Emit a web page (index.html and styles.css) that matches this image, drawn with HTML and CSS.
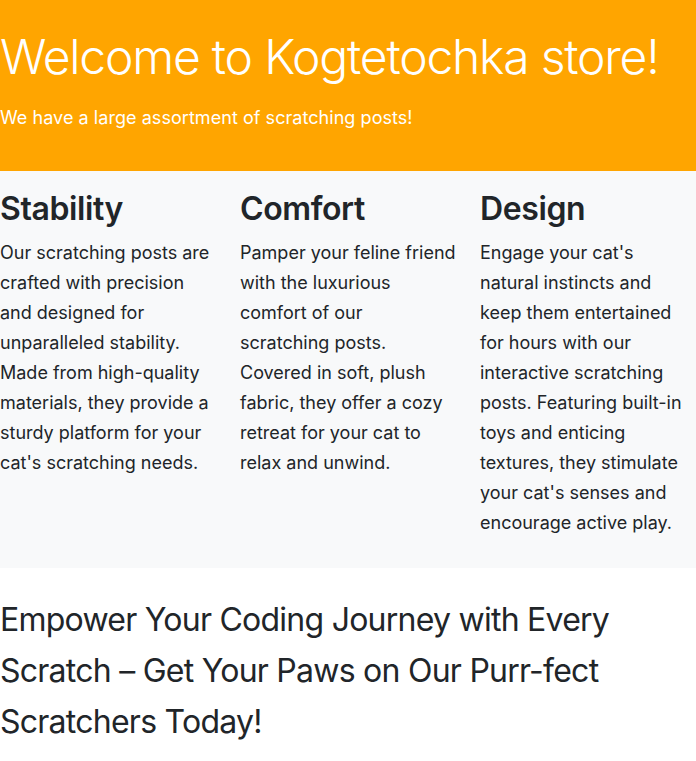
FILE: index.html
```html
<!DOCTYPE html>
<html lang="en">
<head>
<meta charset="utf-8">
<title>Kogtetochka store</title>
<link rel="stylesheet" href="styles.css">
</head>
<body>
<header class="hero">
  <h1 class="hero-title">Welcome to Kogtetochka store!</h1>
  <p class="hero-lead">We have a large assortment of scratching posts!</p>
</header>
<section class="features">
  <div class="feature">
    <h2 class="feature-title">Stability</h2>
    <p class="feature-text">Our scratching posts are crafted with precision and designed for unparalleled stability. Made from high-quality materials, they provide a sturdy platform for your cat's scratching needs.</p>
  </div>
  <div class="feature">
    <h2 class="feature-title">Comfort</h2>
    <p class="feature-text">Pamper your feline friend with the luxurious comfort of our scratching posts. Covered in soft, plush fabric, they offer a cozy retreat for your cat to relax and unwind.</p>
  </div>
  <div class="feature">
    <h2 class="feature-title">Design</h2>
    <p class="feature-text">Engage your cat's natural instincts and keep them entertained for hours with our interactive scratching posts. Featuring built-in toys and enticing textures, they stimulate your cat's senses and encourage active play.</p>
  </div>
</section>
<section class="cta">
  <p class="cta-text">Empower Your Coding Journey with Every Scratch – Get Your Paws on Our Purr-fect Scratchers Today!</p>
</section>
</body>
</html>
```
FILE: styles.css
```css
* { box-sizing: border-box; }
html, body { margin: 0; padding: 0; }
body {
  font-family: Inter, "Noto Sans", sans-serif;
  color: #212529;
  background: #fff;
}
.hero {
  background: #ffa500;
  color: #fff;
  padding: 28px 0 40px;
}
.hero-title {
  margin: 0 0 18px;
  font-size: 48px;
  font-weight: 300;
  line-height: 1.2;
  letter-spacing: -1.2px;
}
.hero-lead {
  margin: 0;
  font-size: 18px;
  font-weight: 400;
  line-height: 1.5;
  letter-spacing: 0.05px;
}
.features {
  background: #f8f9fa;
  display: grid;
  grid-template-columns: 240px 240px 216px;
  padding: 19px 0 30px;
}
.feature { padding-right: 24px; }
.feature:last-child { padding-right: 0; }
.feature-title {
  margin: 0 0 10px;
  font-size: 32px;
  font-weight: 600;
  line-height: 1.2;
  letter-spacing: -0.4px;
}
.feature-text {
  margin: 0;
  font-size: 18px;
  line-height: 30px;
}
.cta { padding: 26px 0; }
.cta-text {
  margin: 0;
  font-size: 32px;
  line-height: 51px;
  letter-spacing: -0.75px;
}
```
